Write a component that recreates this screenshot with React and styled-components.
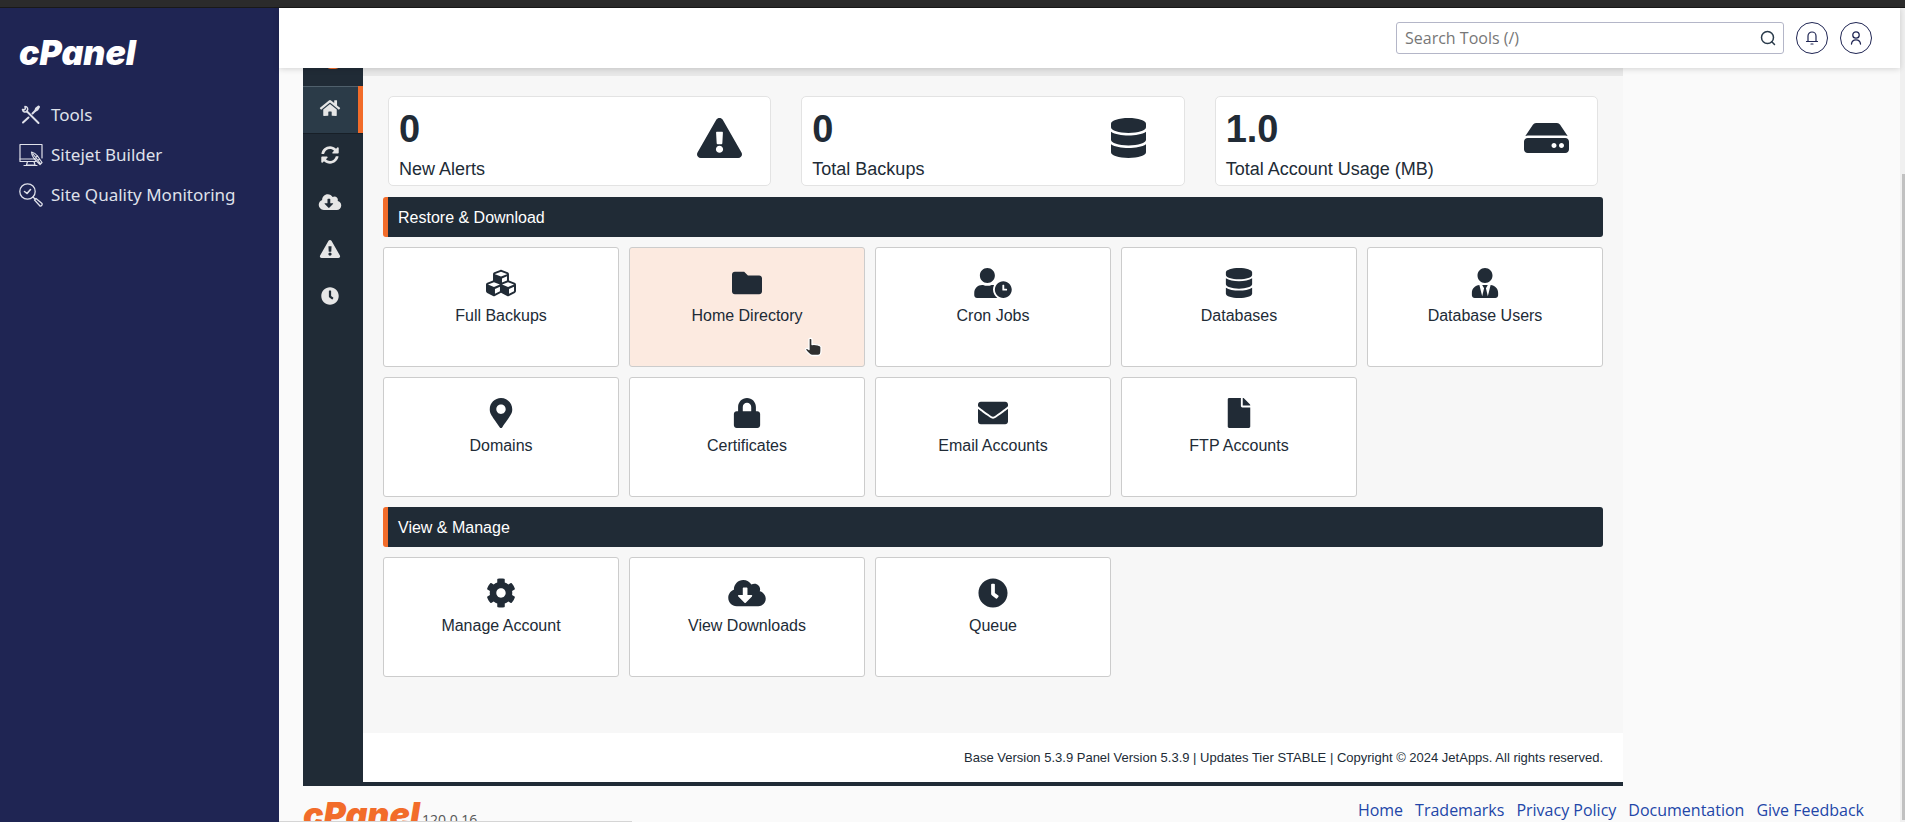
import React from "react";
import styled, { createGlobalStyle } from "styled-components";
import {
  FaHome, FaSyncAlt, FaCloudDownloadAlt, FaExclamationTriangle, FaClock,
  FaDatabase, FaHdd, FaCubes, FaFolder, FaUserClock, FaUserTie,
  FaMapMarkerAlt, FaLock, FaEnvelope, FaFile, FaCog,
} from "react-icons/fa";

const ui = `"Open Sans", "Noto Sans", sans-serif`;
const plugin = `"Liberation Sans", Arial, sans-serif`;
const slate = "#202b36";
const navy = "#1f2553";
const orange = "#f26c2a";

const GlobalStyle = createGlobalStyle`
  *, *::before, *::after { box-sizing: border-box; }
  body { margin: 0; font-family: ${ui}; font-size: 16px; background: #fafafa; }
  a { text-decoration: none; color: inherit; }
  button { font: inherit; margin: 0; }
  ul { list-style: none; margin: 0; padding: 0; }
  svg { display: block; flex: none; }
`;

const Page = styled.div`
  position: relative;
  height: 100vh;
  display: flex;
  flex-direction: column;
  overflow: hidden;
`;

const BrowserEdge = styled.div`
  height: 8px;
  flex: none;
  background: #2b2b2b;
  border-bottom: 1px solid #191919;
`;

const Shell = styled.div`
  flex: 1;
  min-height: 0;
  display: flex;
`;

const Sidebar = styled.nav`
  width: 279px;
  flex: none;
  padding: 28px 19px;
  background: ${navy};
`;

const Wordmark = styled.span`
  display: block;
  font-family: Inter, sans-serif;
  font-size: 34px;
  line-height: 34px;
  font-weight: 900;
  font-style: italic;
  color: ${(p) => p.$color};
`;

const SideList = styled.ul`
  margin-top: 25px;
`;

const SideLink = styled.a`
  display: flex;
  align-items: center;
  gap: 8px;
  height: 40px;
  font-family: "Noto Sans", sans-serif;
  font-size: 17px;
  line-height: 24px;
  color: #dfe1ea;
`;

const Workspace = styled.div`
  flex: 1;
  min-width: 0;
  display: flex;
  flex-direction: column;
`;

const TopBar = styled.header`
  position: relative;
  z-index: 1;
  height: 60px;
  flex: none;
  display: flex;
  align-items: center;
  justify-content: flex-end;
  gap: 12px;
  padding: 0 28px;
  background: #fff;
  box-shadow: 0 1px 6px rgba(0, 0, 0, 0.16);
`;

const SearchField = styled.label`
  width: 388px;
  height: 32px;
  display: flex;
  align-items: center;
  padding: 0 7px 0 8px;
  border: 1px solid #b4b6c8;
  border-radius: 3px;
  background: #fff;
  color: #293a4a;
`;

const SearchInput = styled.input`
  flex: 1;
  min-width: 0;
  padding: 0;
  border: 0;
  outline: 0;
  background: transparent;
  font: 16px ${ui};
  &::placeholder { color: #777; opacity: 1; }
`;

const RoundButton = styled.button`
  width: 32px;
  height: 32px;
  display: grid;
  place-items: center;
  padding: 0;
  border: 1px solid ${navy};
  border-radius: 50%;
  background: #fff;
  color: ${navy};
`;

const Content = styled.main`
  flex: 1;
  min-height: 0;
  overflow: hidden;
  padding: 0 36px 0 24px;
`;

const Plugin = styled.section`
  max-width: 1320px;
  display: flex;
  border-bottom: 4px solid ${slate};
  background: ${slate};
  font-family: ${plugin};
  color: #212b36;
`;

const Rail = styled.nav`
  width: 60px;
  flex: none;
  background: ${slate};
`;

const RailHead = styled.div`
  height: 18px;
  overflow: hidden;
  display: flex;
  align-items: flex-start;
  justify-content: center;
`;

const RailLink = styled.a`
  display: grid;
  place-items: center;
  height: 47px;
  padding: 0 2px 3px 0;
  font-size: 18px;
  color: #e6e6e6;
  border-right: 5px solid ${(p) => (p.$active ? orange : "transparent")};
  background: ${(p) => (p.$active ? "#2b3b48" : "transparent")};
  box-shadow: ${(p) => (p.$active ? "inset 0 1px #50606c, 0 1px #171f27" : "none")};
  svg { width: 24px; height: 18px; }
`;

const Board = styled.div`
  flex: 1;
  min-width: 0;
  background: #f7f7f7;
`;

const Strip = styled.div`
  height: 8px;
  background: #e8e8e8;
`;

const BoardBody = styled.div`
  padding: 20px 20px 56px;
`;

const Stats = styled.div`
  display: grid;
  grid-template-columns: repeat(3, 1fr);
  gap: 30px;
  padding: 0 5px;
  margin-bottom: 11px;
`;

const Stat = styled.article`
  display: grid;
  grid-template-columns: 1fr 73px;
  align-items: center;
  height: 90px;
  padding-left: 10px;
  border: 1px solid #e3e3e3;
  border-radius: 5px;
  background: #fff;
`;

const StatText = styled.div`
  padding-top: 7px;
`;

const StatValue = styled.div`
  font-size: 38px;
  line-height: 40px;
  font-weight: 700;
`;

const StatLabel = styled.div`
  margin-top: 8px;
  font-size: 18px;
  line-height: 24px;
`;

const StatIcon = styled.div`
  padding-bottom: 6px;
  svg { width: ${(p) => p.$width}px; height: 40px; }
`;

const SectionTitle = styled.h2`
  height: 40px;
  margin: 0 0 10px;
  padding: 0 10px;
  border-left: 5px solid ${orange};
  border-radius: 3px;
  background: ${slate};
  color: #fff;
  font-size: 16px;
  line-height: 41px;
  font-weight: 400;
`;

const Tiles = styled.div`
  display: grid;
  grid-template-columns: repeat(5, 1fr);
  gap: 10px;
  & + ${SectionTitle} { margin-top: 10px; }
`;

const Tile = styled.a`
  position: relative;
  height: 120px;
  display: flex;
  flex-direction: column;
  align-items: center;
  gap: 6px;
  padding-top: 20px;
  border: 1px solid #ccc;
  border-radius: 3px;
  background: ${(p) => (p.$hover ? "#fceae0" : "#fff")};
  font-size: 16px;
  line-height: 24px;
  & > svg:first-child { width: 38px; height: 30px; }
`;

const Pointer = styled.svg`
  position: absolute;
  right: 41px;
  bottom: 8px;
`;

const PluginFooter = styled.footer`
  padding: 0 20px;
  background: #fff;
  font-size: 13px;
  line-height: 49px;
  text-align: right;
`;

const PageFooter = styled.footer`
  display: flex;
  align-items: flex-start;
  justify-content: space-between;
  padding-top: 12px;
`;

const Brand = styled.div`
  display: flex;
  align-items: flex-end;
  gap: 2px;
  font-size: 14px;
  line-height: 24px;
  color: #555;
`;

const FooterLinks = styled.div`
  display: flex;
  gap: 12px;
  line-height: 24px;
  color: #2246a8;
`;

const ScrollTrack = styled.div`
  width: 5px;
  flex: none;
  padding: 166px 0 2px 2px;
  background: #f0f0f0;
`;

const ScrollThumb = styled.div`
  height: 100%;
  background: #c1c1c1;
`;

const StatusEdge = styled.div`
  position: absolute;
  left: 279px;
  bottom: 0;
  width: 353px;
  height: 1px;
  background: #d5d5d5;
`;

const stroke = { fill: "none", stroke: "currentColor", strokeLinecap: "round", strokeLinejoin: "round" };

const ToolsIcon = () => (
  <svg width="24" height="24" viewBox="0 0 24 24" {...stroke} strokeWidth="2">
    <path d="M8 8.500 19.500 20" />
    <path d="M4 19.500 9.500 14.500" />
    <path d="M13.500 10.500 17 7" />
    <path d="M16.500 7.500 17 5.500 19.500 3.500 20 4 18.500 6.500z" fill="currentColor" />
    <path d="M6 3.500C8.500 3.500 9.500 6 8 8S4 9 3.500 6.500L5.500 6.700 6.300 5.800z" strokeWidth="1.500" />
  </svg>
);

const SitejetIcon = () => (
  <svg width="24" height="24" viewBox="0 0 24 24" {...stroke} strokeWidth="1.200">
    <path d="M17 18.500H1V1.500H23V15" />
    <path d="M1 16H16" />
    <path d="M8.500 18.500 7.500 22H16l-1-3.500M5 22.500H18" />
    <path d="M12.500 9C15 9.500 17 11 18.500 13L23 19.500 21 21.500 15 15.500C13.500 13.500 12.500 11.500 12.500 9zM14 11 21 20M18.500 13 15.500 15.500M20.500 16 18 18.500" />
  </svg>
);

const QualityIcon = () => (
  <svg width="24" height="24" viewBox="0 0 24 24" {...stroke} strokeWidth="1.300">
    <circle cx="8.500" cy="8.500" r="7.700" />
    <path d="M5.500 8.500 8 10.500 11.500 6.500" strokeWidth="1.600" />
    <path d="M14 14 16 16M15.500 17 17 15.500 23 20.500C23.500 22 22.500 23.300 21 23z" />
  </svg>
);

const SearchIcon = () => (
  <svg width="16" height="16" viewBox="0 0 16 16" {...stroke} strokeWidth="1.500">
    <circle cx="7.500" cy="7.500" r="6" />
    <path d="M11.800 11.800 14.500 14.500" />
  </svg>
);

const BellIcon = () => (
  <svg width="14" height="14" viewBox="0 0 14 14" {...stroke} strokeWidth="1.200">
    <path d="M1.500 10.500H12.500M3 10.500V5A4 4 0 0 1 11 5V10.500M6 13H8" />
  </svg>
);

const PersonIcon = () => (
  <svg width="14" height="14" viewBox="0 0 14 14" {...stroke} strokeWidth="1.300">
    <circle cx="7" cy="4" r="3.200" />
    <path d="M2.500 13C2.700 10.500 4.500 8.800 7 8.800S11.300 10.500 11.500 13" />
  </svg>
);

const HandPointer = () => (
  <Pointer width="19" height="21" viewBox="0 0 19 21" aria-hidden="true">
    <path
      d="M5 2.500C5 .8 8 .8 8 2.500V7.500C11 7 17 8 17 10V14C17 17 15.500 18.500 14 18.500H8C6 18.500 2 14 1.500 12.500 1.500 11 3 10.800 5 12.500z"
      fill="#2f2f2f" stroke="#fff" strokeWidth="1.300" strokeLinejoin="round"
    />
  </Pointer>
);

const sideItems = [
  ["Tools", ToolsIcon],
  ["Sitejet Builder", SitejetIcon],
  ["Site Quality Monitoring", QualityIcon],
];

const railItems = [
  ["Home", FaHome],
  ["Restore", FaSyncAlt],
  ["Downloads", FaCloudDownloadAlt],
  ["Alerts", FaExclamationTriangle],
  ["Queue", FaClock],
];

const stats = [
  ["0", "New Alerts", FaExclamationTriangle, 45],
  ["0", "Total Backups", FaDatabase, 35],
  ["1.0", "Total Account Usage (MB)", FaHdd, 45],
];

const sections = [
  {
    title: "Restore & Download",
    tiles: [
      ["Full Backups", FaCubes],
      ["Home Directory", FaFolder],
      ["Cron Jobs", FaUserClock],
      ["Databases", FaDatabase],
      ["Database Users", FaUserTie],
      ["Domains", FaMapMarkerAlt],
      ["Certificates", FaLock],
      ["Email Accounts", FaEnvelope],
      ["FTP Accounts", FaFile],
    ],
  },
  {
    title: "View & Manage",
    tiles: [
      ["Manage Account", FaCog],
      ["View Downloads", FaCloudDownloadAlt],
      ["Queue", FaClock],
    ],
  },
];

const footerLinks = ["Home", "Trademarks", "Privacy Policy", "Documentation", "Give Feedback"];

export default function App() {
  const hovered = "Home Directory";
  return (
    <>
      <GlobalStyle />
      <Page>
        <BrowserEdge />
        <Shell>
          <Sidebar aria-label="Main">
            <a href="#home"><Wordmark $color="#fff">cPanel</Wordmark></a>
            <SideList>
              {sideItems.map(([label, Icon]) => (
                <li key={label}>
                  <SideLink href="#tools"><Icon />{label}</SideLink>
                </li>
              ))}
            </SideList>
          </Sidebar>
          <Workspace>
            <TopBar>
              <SearchField>
                <SearchInput type="text" placeholder="Search Tools (/)" aria-label="Search Tools" />
                <SearchIcon />
              </SearchField>
              <RoundButton aria-label="Notifications"><BellIcon /></RoundButton>
              <RoundButton aria-label="Account"><PersonIcon /></RoundButton>
            </TopBar>
            <Content>
              <Plugin>
                <Rail aria-label="Backup">
                  <RailHead>
                    <svg width="12" height="2" viewBox="0 0 12 2"><ellipse cx="6" cy="-1" rx="6" ry="2" fill={orange} /></svg>
                  </RailHead>
                  {railItems.map(([label, Icon], i) => (
                    <RailLink key={label} href="#view" aria-label={label} $active={i === 0}><Icon /></RailLink>
                  ))}
                </Rail>
                <Board>
                  <Strip />
                  <BoardBody>
                    <Stats>
                      {stats.map(([value, label, Icon, iconWidth]) => (
                        <Stat key={label}>
                          <StatText>
                            <StatValue>{value}</StatValue>
                            <StatLabel>{label}</StatLabel>
                          </StatText>
                          <StatIcon $width={iconWidth}><Icon /></StatIcon>
                        </Stat>
                      ))}
                    </Stats>
                    {sections.map((section) => (
                      <React.Fragment key={section.title}>
                        <SectionTitle>{section.title}</SectionTitle>
                        <Tiles>
                          {section.tiles.map(([label, Icon]) => (
                            <Tile key={label} href="#view" $hover={label === hovered}>
                              <Icon />
                              {label}
                              {label === hovered && <HandPointer />}
                            </Tile>
                          ))}
                        </Tiles>
                      </React.Fragment>
                    ))}
                  </BoardBody>
                  <PluginFooter>
                    Base Version 5.3.9 Panel Version 5.3.9 | Updates Tier STABLE | Copyright © 2024 JetApps. All rights reserved.
                  </PluginFooter>
                </Board>
              </Plugin>
              <PageFooter>
                <Brand><Wordmark $color={orange}>cPanel</Wordmark>120.0.16</Brand>
                <FooterLinks>
                  {footerLinks.map((label) => <a key={label} href="#info">{label}</a>)}
                </FooterLinks>
              </PageFooter>
            </Content>
          </Workspace>
          <ScrollTrack><ScrollThumb /></ScrollTrack>
        </Shell>
        <StatusEdge />
      </Page>
    </>
  );
}
